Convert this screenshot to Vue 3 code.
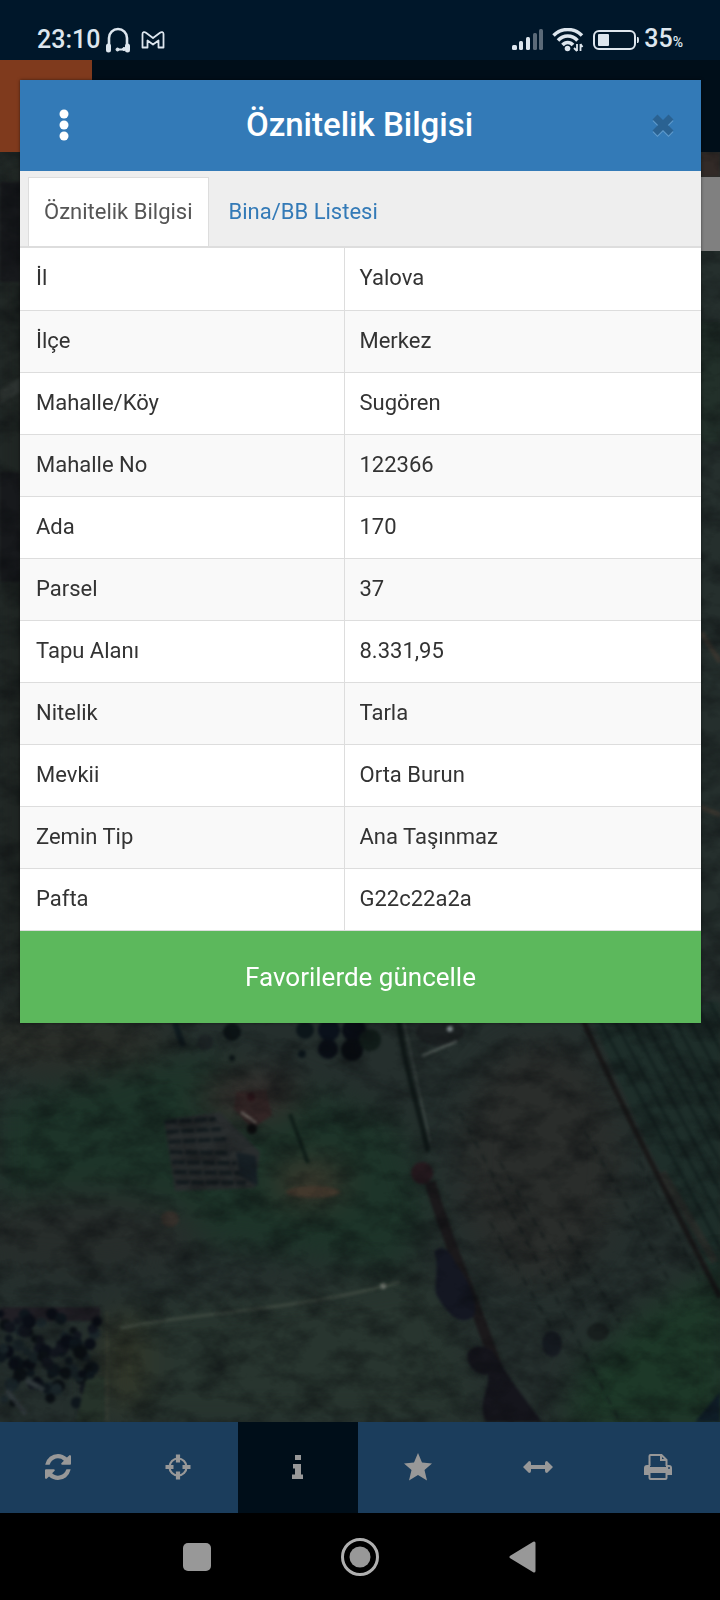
<script setup>
import { ref } from 'vue'

const rows = [
  ['İl', 'Yalova'],
  ['İlçe', 'Merkez'],
  ['Mahalle/Köy', 'Sugören'],
  ['Mahalle No', '122366'],
  ['Ada', '170'],
  ['Parsel', '37'],
  ['Tapu Alanı', '8.331,95'],
  ['Nitelik', 'Tarla'],
  ['Mevkii', 'Orta Burun'],
  ['Zemin Tip', 'Ana Taşınmaz'],
  ['Pafta', 'G22c22a2a'],
]
const tabs = ['Öznitelik Bilgisi', 'Bina/BB Listesi']
const activeTab = ref(0)

// Crop lines of the ploughed field on the right
const furrows = Array.from({ length: 15 }, (_, i) => 'M' + (590 + i * 15) + ' 850 L' + (770 + i * 15) + ' 1190')
// Vineyard rows
const vines = Array.from({ length: 7 }, (_, i) => 'M' + (164 + i * 2) + ' ' + (970 + i * 10) + ' l' + (52 + i * 3) + ' ' + (i < 3 ? -3 : 1))
// Faint tracks in the central field
const tracks = ['M460 960 L620 1270', 'M500 1010 L590 1165', 'M585 980 L670 1130', 'M560 1070 L620 1170', 'M640 1010 L700 1130', 'M490 1070 L560 1190']
const trees = Array.from({ length: 80 }, (_, i) => ({
  x: (i * 61.8) % 98,
  y: 1162 + ((i * i * 7.3 + i * 31) % 90),
  r: 4 + (i % 4),
  c: ['#0a0e16', '#0e161c', '#11151d', '#1a2529', '#0b1014'][i % 5],
}))
</script>

<template>
  <div class="screen">
    <header class="status">
      <div class="status-side">
        <span class="clock">23:10</span>
        <svg width="26" height="26" viewBox="0 0 26 26" fill="none" stroke="#dde6ee" aria-hidden="true">
          <path d="M4 20V11a9 9 0 0 1 18 0v9" stroke-width="2.6" />
          <path d="M3.500 19v4M22.500 19v4" stroke-width="5" stroke-linecap="round" />
          <path d="M12 22.500h7" stroke-width="2" />
          <circle cx="12.500" cy="22.500" r="1.500" fill="#dde6ee" /><circle cx="19" cy="22" r="1.500" fill="#dde6ee" />
        </svg>
        <svg class="mail" width="24" height="18" viewBox="0 0 24 18" fill="none" stroke="#dde6ee" stroke-width="1.800" stroke-linejoin="round" aria-hidden="true">
          <path d="M1.500 16.500V3c0-2 2-2.300 3.500-1.200L12 7l7-5.200c1.500-1.100 3.500-.8 3.500 1.200v13.500h-5V9.500L12 13.500 6.500 9.500v7z" />
        </svg>
      </div>
      <div class="status-side">
        <svg width="33" height="22" viewBox="0 0 33 22" fill="#dde6ee" aria-hidden="true">
          <rect x="1" y="16" width="5" height="5" rx="1.500" /><rect x="8" y="12" width="4" height="9" rx="1.500" />
          <rect x="15" y="8" width="4" height="13" rx="1.500" />
          <g fill="#5b6a78"><rect x="22" y="4" width="4" height="17" rx="1.500" /><rect x="28" y="0" width="4" height="21" rx="1.500" /></g>
        </svg>
        <svg class="wifi" width="32" height="24" viewBox="0 0 32 24" fill="none" stroke="#dde6ee" aria-hidden="true">
          <path d="M1.500 7.500C9.500-.5 22-.5 30 7.500" stroke-width="3.500" />
          <path d="M6 12.500c5.500-6 14-6 19.500 0M10.500 17c3-3.500 7.500-3.500 10.500 0" stroke-width="3.500" />
          <circle cx="15.500" cy="20.500" r="2.800" fill="#dde6ee" stroke="none" />
          <path d="M25 16v7M28.500 16v7M22 20l3 3M28.500 16l2 3" stroke-width="1.800" />
        </svg>
        <svg class="battery" width="47" height="22" viewBox="0 0 47 22" aria-hidden="true">
          <rect x="1" y="2" width="41" height="18" rx="5" fill="none" stroke="#dde6ee" stroke-width="2" />
          <rect x="5" y="5" width="11" height="12" rx="1" fill="#dde6ee" /><path d="M44 8h1q1 0 1 3t-1 3h-1z" fill="#dde6ee" />
        </svg>
        <span class="clock">35<small>%</small></span>
      </div>
    </header>

    <div class="appbar"><div class="brand"></div></div>

    <main class="map">
      <svg class="land" viewBox="0 0 720 1270" preserveAspectRatio="xMidYMax slice" aria-hidden="true">
        <defs>
          <filter id="soft" x="-30%" y="-30%" width="160%" height="160%" color-interpolation-filters="sRGB"><feGaussianBlur stdDeviation="16" /></filter>
          <filter id="edge" x="-30%" y="-30%" width="160%" height="160%" color-interpolation-filters="sRGB"><feGaussianBlur stdDeviation="1.500" /></filter>
          <filter id="grain" x="0" y="0" width="100%" height="100%" color-interpolation-filters="sRGB">
            <feTurbulence type="fractalNoise" baseFrequency="0.03 0.045" numOctaves="5" seed="7" />
            <feColorMatrix values="0 0 0 0 .03  0 0 0 0 .04  0 0 0 0 .05  1.800 0 0 0 -.7" />
          </filter>
        </defs>
        <rect width="720" height="1270" fill="#252f2d" />
        <g filter="url(#soft)">
          <path d="M0 0h30v850H0z" fill="#1d211f" />
          <path d="M0 950L200 900 400 970 430 1060 400 1120 0 1060z" fill="#1d3429" />
          <ellipse cx="60" cy="890" rx="110" ry="30" fill="#2a2e29" />
          <ellipse cx="80" cy="1080" rx="120" ry="40" fill="#272d2b" />
          <ellipse cx="540" cy="1010" rx="80" ry="120" fill="#2a2d2b" />
          <ellipse cx="250" cy="945" rx="50" ry="24" fill="#352f2d" />
          <ellipse cx="310" cy="1030" rx="36" ry="20" fill="#3b372c" />
          <path d="M110 1160L440 1120 480 1270H100z" fill="#28352f" />
          <ellipse cx="125" cy="1210" rx="24" ry="50" fill="#323729" />
        </g>
        <g filter="url(#edge)">
          <path d="M585 850h135v290C680 1060 630 960 585 850z" fill="#1e2e2a" />
        </g>
        <path d="M585 1210C620 1180 650 1150 730 1115V1280H560z" fill="#1d3828" filter="url(#soft)" />
        <g filter="url(#edge)">
          <path d="M695 1270l25-30v30z" fill="#101f2a" />
          <path v-for="(f, i) in furrows" :key="'f' + i" :d="f" stroke="#121e1d" stroke-width="3" opacity=".7" />
          <path v-for="(t, i) in tracks" :key="'t' + i" :d="t" stroke="#141c1c" stroke-width="2" stroke-dasharray="9 7" opacity=".8" />
          <path d="M575 850C610 930 640 990 720 1145" fill="none" stroke="#191818" stroke-width="5" />
          <path d="M662 1020L715 1110" stroke="#332f2c" stroke-width="8" opacity=".6" />
          <path d="M398 865C405 920 420 960 428 1000" fill="none" stroke="#101918" stroke-width="5" />
          <path d="M403 865L430 990" stroke="#535c59" stroke-width="1" />
          <path d="M430 1030C450 1100 485 1170 515 1270" fill="none" stroke="#1b191b" stroke-width="11" />
          <ellipse cx="422" cy="1021" rx="11" ry="11" fill="#281b20" />
          <path d="M434 1100c8-9 16-2 22 12 16 20 22 42 18 52-16 14-30-8-38-22-2-15 4-25-2-42z" fill="#141722" />
          <path d="M468 1200q8-10 24-2l22 34 28 38h-56c-10-20 4-30 2-48-10 4-24-10-20-22z" fill="#15151c" />
          <ellipse cx="552" cy="1192" rx="10" ry="13" fill="#161b21" /><ellipse cx="598" cy="1180" rx="11" ry="9" fill="#181f1e" />
          <path d="M164 968l56-8 40 40-5 36-80 3z" fill="#292d2e" />
          <path v-for="(v, i) in vines" :key="'v' + i" :d="v" stroke="#131b1e" stroke-width="4" stroke-dasharray="13 2" />
          <path d="M236 1000l20 4 2 30-18-10z" fill="#161f24" />
          <path d="M236 940l30-2 6 25-20 14-18-20z" fill="#322525" />
          <circle cx="252" cy="977" r="5" fill="#0c0d0e" /><circle cx="251" cy="945" r="4" fill="#2a1519" />
          <path d="M241 960l15 11" stroke="#7d7a73" stroke-width="2" />
          <path d="M290 962l18 49" stroke="#101e19" stroke-width="4" />
          <ellipse cx="313" cy="1040" rx="27" ry="6" fill="#4a392d" opacity=".7" />
          <ellipse cx="170" cy="1067" rx="9" ry="8" fill="#35302b" />
          <path d="M120 1176C210 1158 290 1160 400 1130" fill="none" stroke="#465046" stroke-width="3" opacity=".7" />
          <circle cx="383" cy="1134" r="3" fill="#6e746c" />
          <path d="M107 1160v110" stroke="#3a4034" stroke-width="4" opacity=".5" />
          <path d="M0 1155h100v14H0z" fill="#211f25" />
          <circle v-for="(t, i) in trees" :key="'r' + i" :cx="t.x" :cy="t.y" :r="t.r" :fill="t.c" />
          <path d="M26 1228l18 10M6 1238l20 24" stroke="#30383b" stroke-width="5" />
          <path d="M76 1270l10-42 18-4v46z" fill="#26332a" />
          <path d="M175 871l8 23" stroke="#101c20" stroke-width="6" />
          <circle cx="205" cy="890" r="8" fill="#1d2425" />
          <circle cx="232" cy="880" r="9" fill="#0c1416" /><circle cx="232" cy="906" r="3" fill="#0c1416" />
          <circle cx="305" cy="878" r="9" fill="#0c161a" /><circle cx="302" cy="902" r="4" fill="#0c161a" />
          <circle cx="329" cy="878" r="11" fill="#0a111b" /><circle cx="328" cy="897" r="10" fill="#0a0f17" />
          <circle cx="354" cy="878" r="12" fill="#090d15" /><circle cx="352" cy="898" r="11" fill="#090d12" /><circle cx="370" cy="888" r="11" fill="#111c19" />
          <ellipse cx="440" cy="880" rx="24" ry="14" fill="#1c2122" />
          <path d="M422 904l35-15" stroke="#5e6763" stroke-width="2" /><circle cx="450" cy="877" r="3" fill="#818b8e" />
          <path d="M0 30h20v100H0zM0 320h20v110H0z" fill="#17191c" />
          <path d="M0 238l20-12v14L0 252z" fill="#2c3230" />
          <path d="M701 0h19v25h-19z" fill="#322a27" />
          <path d="M701 170h19v120h-19z" fill="#22302a" />
          <path d="M701 480l19 30M701 655l19 8" stroke="#38352f" stroke-width="5" />
        </g>
        <rect width="720" height="1270" filter="url(#grain)" opacity=".55" />
      </svg>
      <div class="side-panel"></div>
    </main>

    <nav class="toolbar" aria-label="Harita araçları">
      <button type="button" aria-label="Yenile">
        <svg width="26" height="26" viewBox="0 0 1536 1536" fill="currentColor"><path d="M1511 928q0 5-1 7-64 268-268 434.500T764 1536q-146 0-282.500-55T238 1324l-129 129q-19 19-45 19t-45-19-19-45V960q0-26 19-45t45-19h448q26 0 45 19t19 45-19 45l-137 137q71 66 161 102t187 36q134 0 250-65t186-179q11-17 53-117 8-23 30-23h192q13 0 22.500 9.500t9.500 22.500zM1536 128v448q0 26-19 45t-45 19h-448q-26 0-45-19t-19-45 19-45l138-138Q969 256 768 256q-134 0-250 65T332 500q-11 17-53 117-8 23-30 23H50q-13 0-22.500-9.500T18 608v-7q65-268 270-434.500T768 0q146 0 284 55.500T1297 212l130-129q19-19 45-19t45 19 19 45z" /></svg>
      </button>
      <button type="button" aria-label="Konum">
        <svg width="26" height="26" viewBox="0 0 26 26" fill="none" stroke="currentColor"><circle cx="13" cy="13" r="8.500" stroke-width="2.200" /><path d="M13 .500v8M13 17.500v8M.500 13h8M17.500 13h8" stroke-width="4.200" /></svg>
      </button>
      <button type="button" class="on" aria-label="Bilgi">
        <svg width="12" height="24" viewBox="0 0 12 24" fill="currentColor"><path d="M3 0h6v5H3zM1 9h8v10.500h2V24H0v-4.500h3v-6H1z" /></svg>
      </button>
      <button type="button" aria-label="Favoriler">
        <svg width="28" height="28" viewBox="0 0 28 28" fill="currentColor"><path d="M14 0l4 9.500 10 1-7.500 6.500 2.500 10.500-9-5.500-9 5.500 2.500-10.500L0 10.500l10-1z" /></svg>
      </button>
      <button type="button" aria-label="Ölçüm">
        <svg width="30" height="12" viewBox="0 0 30 12" fill="currentColor"><path d="M0 6L6 0q2 0 2 2v2h14V2q0-2 2-2l6 6-6 6q-2 0-2-2V8H8v2q0 2-2 2z" /></svg>
      </button>
      <button type="button" aria-label="Yazdır">
        <svg width="28" height="26" viewBox="0 0 28 26"><path d="M5.500 12V2q0-1 1-1h11l5 5v6M17 1v5h5M5.500 18v6q0 1 1 1h15q1 0 1-1v-6z" fill="none" stroke="currentColor" stroke-width="2" /><path d="M0 14q0-3 3-3h3v2h16v-2h3q3 0 3 3v7h-5v-3H5v3H0z" fill="currentColor" /><circle cx="25" cy="14" r="1" fill="#1b3d5c" /></svg>
      </button>
    </nav>

    <nav class="system" aria-label="Sistem">
      <button type="button" aria-label="Son uygulamalar"><svg width="28" height="28" viewBox="0 0 28 28"><rect width="28" height="28" rx="5" fill="#989898" /></svg></button>
      <button type="button" aria-label="Ana ekran"><svg width="38" height="38" viewBox="0 0 38 38"><circle cx="19" cy="19" r="17.500" fill="none" stroke="#b0b0b0" stroke-width="3" /><circle cx="19" cy="19" r="10.500" fill="#989898" /></svg></button>
      <button type="button" aria-label="Geri"><svg width="28" height="34" viewBox="0 0 28 34"><path d="M2 17L25 3v28z" fill="#989898" stroke="#989898" stroke-width="3" stroke-linejoin="round" /></svg></button>
    </nav>

    <section class="dialog" role="dialog" aria-labelledby="dialog-title">
      <header class="dialog-head">
        <button type="button" class="menu" aria-label="Menü"><svg width="10" height="32" viewBox="0 0 10 32" fill="#fff"><circle cx="5" cy="5" r="4.500" /><circle cx="5" cy="16" r="4.500" /><circle cx="5" cy="27" r="4.500" /></svg></button>
        <h1 id="dialog-title">Öznitelik Bilgisi</h1>
        <button type="button" class="close" aria-label="Kapat"><svg width="24" height="24" viewBox="0 0 24 24" fill="none" stroke-width="7"><path d="M4 5.500l16 16M20 5.500L4 21.500" stroke="#5f9bcd" /><path d="M4 4l16 16M20 4L4 20" stroke="#2a6292" /></svg></button>
      </header>
      <div class="tabs" role="tablist">
        <button v-for="(t, i) in tabs" :key="t" type="button" role="tab" :aria-selected="activeTab === i" :class="{ active: activeTab === i }" @click="activeTab = i">{{ t }}</button>
      </div>
      <table>
        <tbody>
          <tr v-for="r in rows" :key="r[0]"><th scope="row">{{ r[0] }}</th><td>{{ r[1] }}</td></tr>
        </tbody>
      </table>
      <button type="button" class="save">Favorilerde güncelle</button>
    </section>
  </div>
</template>

<style>
body { margin: 0; background: #000; }
</style>

<style scoped>
* { box-sizing: border-box; }
.screen { position: relative; display: grid; grid-template-rows: 60px 92px 1fr 91px 87px; min-height: 100vh; font-family: Roboto, "Liberation Sans", sans-serif; overflow: hidden; }
button { font: inherit; border: 0; padding: 0; background: none; cursor: pointer; }
svg { display: block; }
.status { display: flex; justify-content: space-between; align-items: center; padding: 20px 37px 0 37px; background: #00172a; color: #dde6ee; }
.status-side { display: flex; align-items: center; }
.status-side:first-child { gap: 5px; }
.clock { font-size: 25px; line-height: 30px; font-weight: 500; }
.clock small { font-size: 14px; }
.mail { margin-left: 5px; }
.wifi { margin-left: 8px; }
.battery { margin: 0 4px 0 9px; }
.appbar { display: flex; background: #000e19; }
.brand { width: 92px; background: #7f3a1d; }
.map { position: relative; overflow: hidden; background: #252f2d; }
.land { position: absolute; inset: 0; width: 100%; height: 100%; }
.side-panel { position: absolute; top: 25px; right: 0; width: 24px; height: 74px; background: #808080; }
.toolbar { display: grid; grid-template-columns: repeat(6, 1fr); background: #1b3d5c; color: #989898; }
.toolbar button { display: grid; place-items: center; color: inherit; padding: 0 4px 2px 0; }
.toolbar .on { background: #000e19; margin: 0 2px 0 -2px; padding-right: 0; }
.system { display: flex; justify-content: center; align-items: center; gap: 130px; background: #000; }
.dialog { position: absolute; top: 80px; left: 20px; right: 19px; background: #fff; box-shadow: 0 0 3px rgba(0, 0, 0, .5); }
.dialog-head { display: grid; grid-template-columns: 48px 1fr 48px; align-items: center; height: 91px; padding: 0 14px 2px 20px; background: #337ab7; color: #fff; }
.menu, .close { display: grid; place-items: center; height: 48px; }
h1 { margin: 0; padding-right: 8px; text-align: center; font-size: 33px; line-height: 40px; font-weight: 500; }
.tabs { display: flex; gap: 4px; padding: 6px 8px 0; background: #eee; border-bottom: 2px solid #ddd; }
.tabs button { height: 69px; padding: 0 15px; border: 1px solid transparent; border-bottom: 0; font-size: 22px; line-height: 32px; color: #337ab7; }
.tabs .active { background: #fff; border-color: #ddd; color: #555; }
table { width: 100%; border-collapse: collapse; table-layout: fixed; }
th, td { height: 62px; padding: 0 15px 1px; text-align: left; font-size: 22px; line-height: 32px; font-weight: 400; color: #333; border-bottom: 1px solid #ddd; }
th { width: 324px; border-right: 1px solid #ddd; padding-left: 16px; }
tr:nth-child(even) { background: #f9f9f9; }
.save { display: block; width: 100%; height: 92px; background: #5cb85c; color: #fff; font-size: 26px; line-height: 32px; }
</style>
